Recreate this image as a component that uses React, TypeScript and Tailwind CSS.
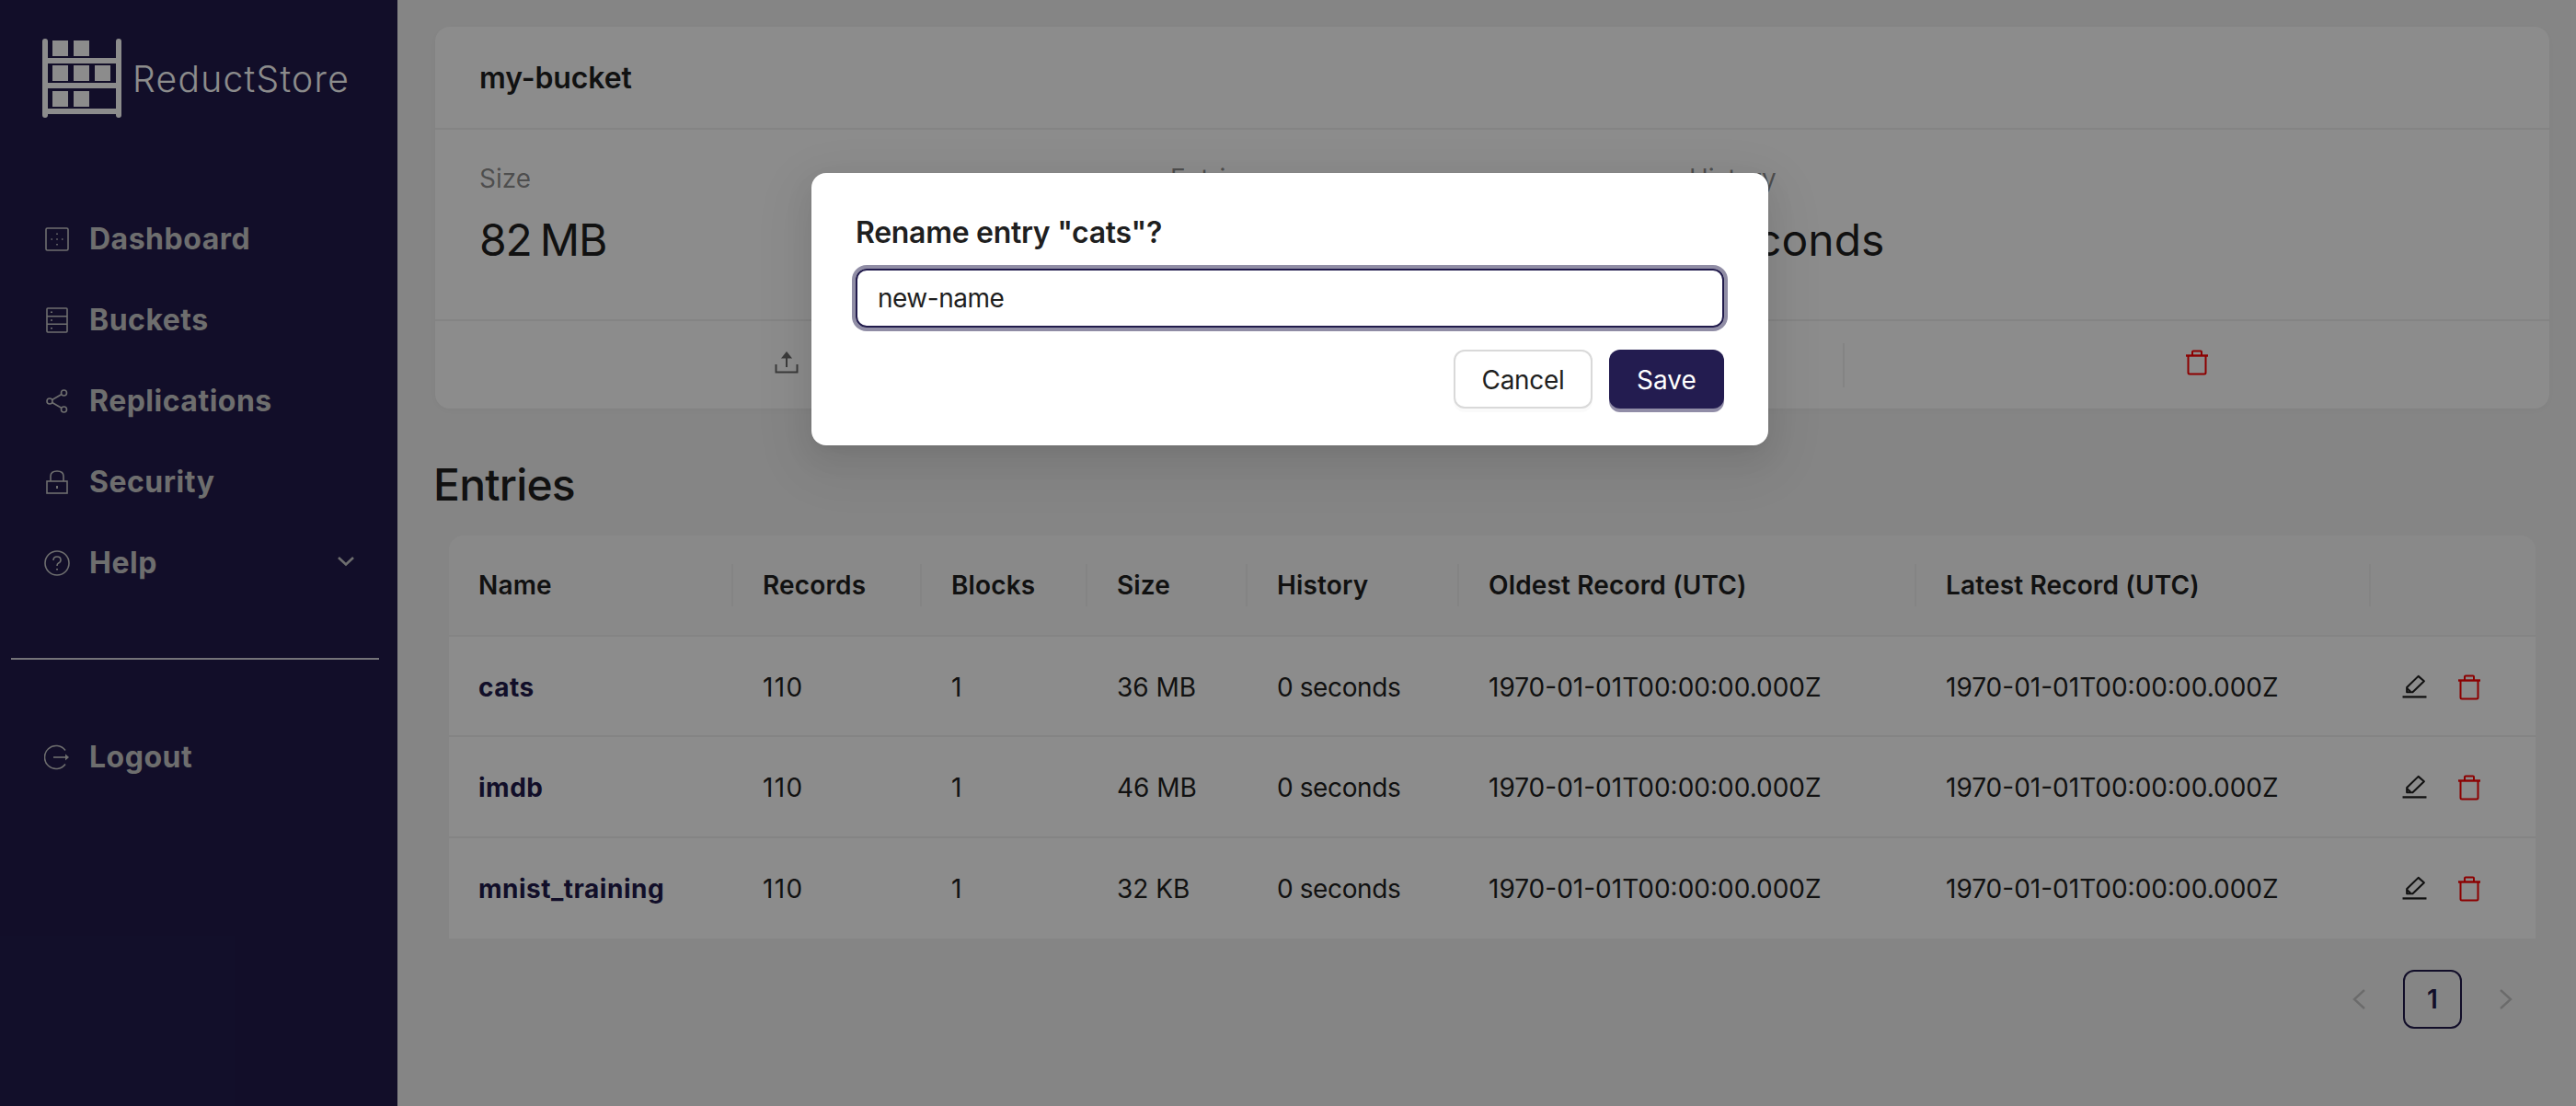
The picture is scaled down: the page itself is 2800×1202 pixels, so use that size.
import React from "react";

const Trash = () => (
  <svg width="26" height="28" viewBox="0 0 26 28" fill="none" stroke="#ff0000" strokeWidth="2" className="block">
    <path d="M1 6.5H25" strokeWidth="2.4" />
    <path d="M8 6V2.5Q8 1.5 9 1.5H17Q18 1.5 18 2.5V6" />
    <path d="M3.5 7V25Q3.5 26.5 5 26.5H21Q22.5 26.5 22.5 25V7" />
  </svg>
);

const Pencil = () => (
  <svg width="27" height="27" viewBox="0 0 26 26" fill="none" stroke="#1f1f1f" strokeWidth="2" className="block">
    <path d="M0.5 23.5H25.5" strokeWidth="2.2" />
    <path d="M5 18.5V13.5L17 1.8L23 7L11 18.5Z" strokeLinejoin="round" />
    <path d="M5 14.5L9 18" />
  </svg>
);

const Upload = () => (
  <svg width="26" height="24" viewBox="0 0 26 24" fill="none" stroke="#6b6b6b" strokeWidth="2" className="block">
    <path d="M1.5 14V22.5H24.5V14" />
    <path d="M13 17V2" />
    <path d="M9 6.5L13 1.5L17 6.5Z" fill="#6b6b6b" />
  </svg>
);

const icons: Record<string, React.ReactNode> = {
  Dashboard: (
    <svg width="26" height="26" viewBox="0 0 26 26" fill="none" stroke="#c8c8c8" strokeWidth="1.6">
      <rect x="1" y="1" width="24" height="24" rx="1.5" />
      <path d="M13 6.5V8M13 12.3V13.7M13 18V19.5M6.5 13H8M18 13H19.5" />
    </svg>
  ),
  Buckets: (
    <svg width="24" height="28" viewBox="0 0 24 28" fill="none" stroke="#c8c8c8" strokeWidth="1.6">
      <rect x="1" y="1" width="22" height="26" rx="1" />
      <path d="M1 9.7H23M1 18.3H23" />
      <path d="M5 5.2H7M5 14H7M5 22.8H7" />
    </svg>
  ),
  Replications: (
    <svg width="24" height="26" viewBox="0 0 24 26" fill="none" stroke="#c8c8c8" strokeWidth="1.6">
      <circle cx="19.5" cy="4" r="3" />
      <circle cx="4" cy="13" r="3" />
      <circle cx="19.5" cy="22" r="3" />
      <path d="M6.7 11.5L17 5.5M6.7 14.5L17 20.5" />
    </svg>
  ),
  Security: (
    <svg width="24" height="26" viewBox="0 0 24 26" fill="none" stroke="#c8c8c8" strokeWidth="1.6">
      <rect x="1" y="12" width="22" height="13" />
      <path d="M5 12V6.5Q5 1 12 1Q19 1 19 6.5V12" />
      <path d="M12 17V20" strokeWidth="2" />
    </svg>
  ),
  Help: (
    <svg width="28" height="28" viewBox="0 0 28 28" fill="none" stroke="#c8c8c8" strokeWidth="1.6">
      <circle cx="14" cy="14" r="13" />
      <path d="M10 11Q10 7 14 7Q18 7 18 10.5Q18 13 15.5 14Q14 14.7 14 17" />
      <path d="M14 20V21.5" strokeWidth="2" />
    </svg>
  ),
  Logout: (
    <svg width="28" height="28" viewBox="0 0 28 28" fill="none" stroke="#c8c8c8" strokeWidth="1.6">
      <path d="M23 6.5A12.5 12.5 0 1 0 23 21.5" />
      <path d="M10 14H26" />
      <path d="M23 10.5L27 14L23 17.5Z" fill="#c8c8c8" stroke="none" />
    </svg>
  ),
};

const Logo = () => (
  <svg width="86" height="86" viewBox="0 0 86 86" fill="#ffffff" className="block shrink-0">
    <rect x="0" y="0" width="6" height="86" rx="3" />
    <rect x="80" y="0" width="6" height="86" rx="3" />
    <rect x="4" y="21" width="78" height="6" />
    <rect x="4" y="48" width="78" height="6" />
    <rect x="4" y="76" width="78" height="6" />
    <rect x="11" y="2" width="17" height="17" />
    <rect x="34" y="2" width="17" height="17" />
    <rect x="11" y="29" width="17" height="17" />
    <rect x="34" y="29" width="17" height="17" />
    <rect x="57" y="29" width="17" height="17" />
    <rect x="11" y="57" width="17" height="17" />
    <rect x="34" y="57" width="17" height="17" />
  </svg>
);

function NavItem({ label, chevron }: { label: string; chevron?: boolean }) {
  return (
    <div className="flex h-[88px] items-center pl-[46px] pr-[46px]">
      <div className="flex w-[32px] justify-center">{icons[label]}</div>
      <span className="ml-[19px] text-[32px] font-bold tracking-[0.5px] text-[#c8c8c8]">{label}</span>
      {chevron && (
        <svg width="20" height="12" viewBox="0 0 20 12" fill="none" stroke="#c8c8c8" strokeWidth="2.6" className="ml-auto mb-[4px]">
          <path d="M2 2L10 9.5L18 2" />
        </svg>
      )}
    </div>
  );
}

const cols = "grid grid-cols-[309px_205px_180px_174px_230px_497px_494px_179px]";
const headers = ["Name", "Records", "Blocks", "Size", "History", "Oldest Record (UTC)", "Latest Record (UTC)", ""];
const rows = [
  { n: "cats", s: "36 MB" },
  { n: "imdb", s: "46 MB" },
  { n: "mnist_training", s: "32 KB" },
];
const ts = "1970-01-01T00:00:00.000Z";

export default function App() {
  return (
    <div className="relative flex h-[1202px] w-[2800px] overflow-hidden bg-[#f3f3f3] font-['Inter',sans-serif] text-[28px] text-[#1f1f1f]">
      <aside className="flex w-[432px] shrink-0 flex-col bg-[#211b4c]">
        <div className="flex items-start pl-[46px] pt-[42px]">
          <Logo />
          <span className="ml-[12px] mt-[21px] text-[39px] font-light leading-[46px] tracking-[1.3px] text-white">ReductStore</span>
        </div>
        <nav className="mt-[88px]">
          <NavItem label="Dashboard" />
          <NavItem label="Buckets" />
          <NavItem label="Replications" />
          <NavItem label="Security" />
          <NavItem label="Help" chevron />
        </nav>
        <div className="ml-[12px] mt-[59px] h-[2px] w-[400px] bg-[#ffffff]/80" />
        <div className="mt-[62px]">
          <NavItem label="Logout" />
        </div>
      </aside>

      <main className="flex min-w-0 flex-1 flex-col pl-[41px] pr-[29px] pt-[29px]">
        <section className="h-[415px] rounded-[16px] bg-white shadow-[0_2px_8px_rgba(0,0,0,0.04)]">
          <div className="flex h-[112px] items-center border-b-2 border-[#f0f0f0] pl-[48px] pt-[2px] text-[32px] font-semibold tracking-[-0.1px]">
            my-bucket
          </div>
          <div className="relative flex h-[208px] border-b-2 border-[#f0f0f0] pl-[48px] pt-[31px]">
            <div className="w-[751px]">
              <div className="leading-[44px] text-black/45">Size</div>
              <div className="mt-[15px] text-[48px] leading-[60px] tracking-[-1.2px] [word-spacing:-3px]">82 MB</div>
            </div>
            <div className="w-[564px]">
              <div className="leading-[44px] text-black/45">Entries</div>
              <div className="mt-[15px] text-[48px] leading-[60px]">3</div>
            </div>
            <div>
              <div className="leading-[44px] text-black/45">History</div>
              <div className="mt-[15px] text-[48px] leading-[60px] [word-spacing:-24px]">0 seconds</div>
            </div>
          </div>
          <div className="grid h-[95px] grid-cols-3 items-center">
            <div className="flex h-[48px] items-center justify-center border-r-2 border-[#f0f0f0] pb-[6px]">
              <Upload />
            </div>
            <div className="flex h-[48px] items-center justify-center border-r-2 border-[#f0f0f0]" />
            <div className="flex h-[48px] items-center justify-center pb-[6px]">
              <Trash />
            </div>
          </div>
        </section>

        <h2 className="mt-[50px] ml-[-2px] text-[48px] font-medium leading-[66px] tracking-[-0.8px]">Entries</h2>

        <div className="ml-[15px] mt-[22px] w-[2268px]">
          <div className={`${cols} h-[110px] items-center rounded-t-[16px] border-b-2 border-[#f0f0f0] bg-[#fafafa] font-semibold tracking-[0.15px]`}>
            {headers.map((h, i) => (
              <div key={i} className={`flex h-[46px] items-center pl-[32px] ${i < 7 ? "border-r-2 border-[#f0f0f0]" : ""}`}>
                {h}
              </div>
            ))}
          </div>
          {rows.map((r, i) => (
            <div key={r.n} className={`${cols} h-[109.33px] items-center border-b-2 bg-white ${i < 2 ? "border-[#f0f0f0] pt-[2px]" : "border-transparent pt-[3px]"}`}>
              <div className="pl-[32px] font-bold tracking-[0.5px] text-[#211b4c]">{r.n}</div>
              <div className="pl-[32px] tracking-[1.4px]">110</div>
              <div className="pl-[32px]">1</div>
              <div className="pl-[32px]">{r.s}</div>
              <div className="pl-[32px] tracking-[-0.4px]">0 seconds</div>
              <div className="pl-[32px]">{ts}</div>
              <div className="pl-[32px]">{ts}</div>
              <div className="flex items-center gap-[33px] pl-[34px]">
                <Pencil />
                <Trash />
              </div>
            </div>
          ))}
        </div>

        <div className="mr-[15px] mt-[34px] flex items-center justify-end gap-[16px]">
          <div className="flex h-[64px] w-[64px] items-center justify-center">
            <svg width="16" height="24" viewBox="0 0 16 24" fill="none" stroke="#c4c4c4" strokeWidth="2.4">
              <path d="M14 2L3 12L14 22" />
            </svg>
          </div>
          <div className="flex h-[64px] w-[64px] items-center justify-center rounded-[12px] border-2 border-[#211b4c] font-semibold text-[#211b4c]">
            1
          </div>
          <div className="flex h-[64px] w-[64px] items-center justify-center">
            <svg width="16" height="24" viewBox="0 0 16 24" fill="none" stroke="#c4c4c4" strokeWidth="2.4">
              <path d="M2 2L13 12L2 22" />
            </svg>
          </div>
        </div>
      </main>

      <div className="absolute inset-0 flex justify-center bg-black/45 pl-[4px] pt-[188px]">
        <div className="h-[296px] w-[1040px] rounded-[16px] bg-white px-[48px] pb-[40px] pt-[47px] shadow-[0_12px_32px_rgba(0,0,0,0.08),0_6px_12px_-8px_rgba(0,0,0,0.12),0_18px_56px_16px_rgba(0,0,0,0.05)]">
          <div className="text-[32px] font-semibold leading-[36px] tracking-[-0.3px]">Rename entry "cats"?</div>
          <input
            readOnly
            value="new-name"
            className="mt-[21px] block h-[64px] w-[944px] rounded-[12px] border-2 border-[#211b4c] px-[22px] text-[28px] tracking-[-0.5px] shadow-[0_0_0_4px_rgba(33,27,76,0.5)] outline-none"
          />
          <div className="mt-[24px] flex justify-end gap-[18px]">
            <button className="h-[64px] w-[151px] rounded-[12px] border-2 border-[#d9d9d9] bg-white pt-[2px] tracking-[-0.3px] shadow-[0_4px_0_rgba(0,0,0,0.02)]">
              Cancel
            </button>
            <button className="h-[64px] w-[125px] rounded-[12px] bg-[#231c50] pt-[2px] text-white shadow-[0_4px_0_rgba(35,28,80,0.5)]">
              Save
            </button>
          </div>
        </div>
      </div>
    </div>
  );
}
